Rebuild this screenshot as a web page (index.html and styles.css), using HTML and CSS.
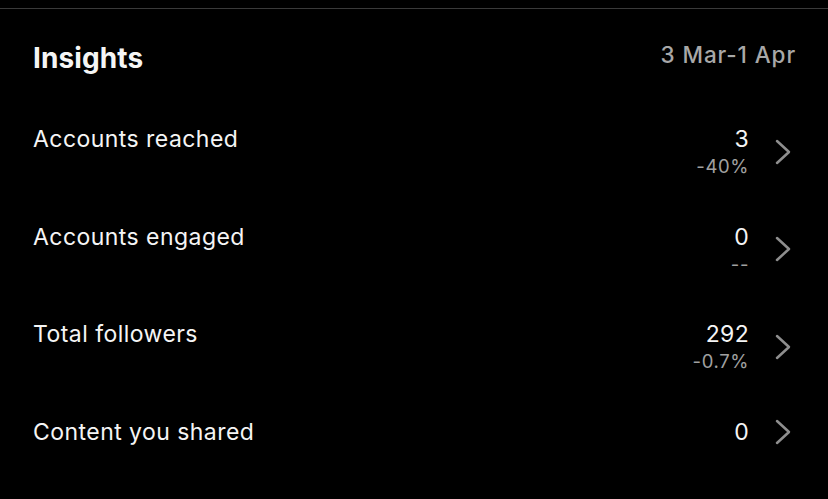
FILE: index.html
```html
<!DOCTYPE html>
<html>
<head>
<meta charset="utf-8">
<link rel="stylesheet" href="styles.css">
</head>
<body>
<div class="divider"></div>
<section class="insights">
  <header class="head">
    <h1 class="title">Insights</h1>
    <span class="range">3 Mar-1 Apr</span>
  </header>
  <ul class="rows">
    <li class="row">
      <span class="label">Accounts reached</span>
      <span class="side">
        <span class="vals"><span class="num">3</span><span class="delta">-40%</span></span>
        <svg class="chev" viewBox="0 0 16 26"><path d="M2 2 L14 13 L2 24"/></svg>
      </span>
    </li>
    <li class="row">
      <span class="label">Accounts engaged</span>
      <span class="side">
        <span class="vals"><span class="num">0</span><span class="delta">--</span></span>
        <svg class="chev" viewBox="0 0 16 26"><path d="M2 2 L14 13 L2 24"/></svg>
      </span>
    </li>
    <li class="row">
      <span class="label">Total followers</span>
      <span class="side">
        <span class="vals"><span class="num">292</span><span class="delta">-0.7%</span></span>
        <svg class="chev" viewBox="0 0 16 26"><path d="M2 2 L14 13 L2 24"/></svg>
      </span>
    </li>
    <li class="row">
      <span class="label">Content you shared</span>
      <span class="side">
        <span class="vals"><span class="num">0</span></span>
        <svg class="chev" viewBox="0 0 16 26"><path d="M2 2 L14 13 L2 24"/></svg>
      </span>
    </li>
  </ul>
</section>
</body>
</html>
```
FILE: styles.css
```css
* { box-sizing: border-box; }
html, body { margin: 0; padding: 0; background: #000; }
body {
  width: 828px; height: 499px; overflow: hidden;
  font-family: Inter, "Noto Sans", sans-serif;
  color: #f5f5f5;
  padding-top: 8px;
}
.divider { height: 1px; background: #3a3a3a; }
.insights { padding: 0 33px; }
.head {
  display: flex; justify-content: space-between; align-items: flex-start;
  padding-top: 32px; height: 74px;
}
.title { margin: 0; font-size: 28px; line-height: 34px; font-weight: 700; letter-spacing: 0.1px; }
.range { font-size: 22.5px; line-height: 34px; font-weight: 500; color: #a8a8a8; letter-spacing: 0.9px; margin-top: -3px; margin-right: -1px; }
.rows { list-style: none; margin: 0; padding: 0; }
.row {
  display: flex; align-items: flex-start; height: 97.5px; padding-top: 42px;
}
.label { flex: 1; font-size: 23px; letter-spacing: 0.45px; line-height: 28px; }
.side { display: flex; align-items: center; }
.vals { display: flex; flex-direction: column; align-items: flex-end; }
.num { font-size: 23px; line-height: 28px; letter-spacing: 0.3px; }
.delta { font-size: 18.5px; line-height: 23px; margin-top: 2px; color: #a0a0a0; letter-spacing: 0.6px; }
.chev {
  width: 16px; height: 26px; margin-left: 26px; margin-right: 4px;
  fill: none; stroke: #8e8e8e; stroke-width: 2.5; stroke-linecap: round; stroke-linejoin: round;
}
```
